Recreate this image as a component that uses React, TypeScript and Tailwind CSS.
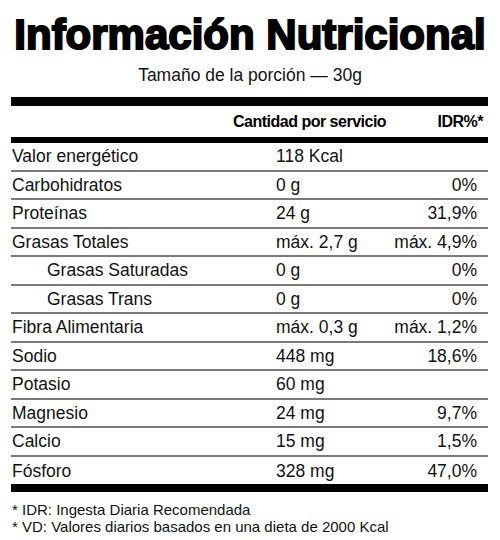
const rows: { label: string; amount: string; idr: string; indent?: boolean }[] = [
  { label: "Valor energético", amount: "118 Kcal", idr: "" },
  { label: "Carbohidratos", amount: "0 g", idr: "0%" },
  { label: "Proteínas", amount: "24 g", idr: "31,9%" },
  { label: "Grasas Totales", amount: "máx. 2,7 g", idr: "máx. 4,9%" },
  { label: "Grasas Saturadas", amount: "0 g", idr: "0%", indent: true },
  { label: "Grasas Trans", amount: "0 g", idr: "0%", indent: true },
  { label: "Fibra Alimentaria", amount: "máx. 0,3 g", idr: "máx. 1,2%" },
  { label: "Sodio", amount: "448 mg", idr: "18,6%" },
  { label: "Potasio", amount: "60 mg", idr: "" },
  { label: "Magnesio", amount: "24 mg", idr: "9,7%" },
  { label: "Calcio", amount: "15 mg", idr: "1,5%" },
  { label: "Fósforo", amount: "328 mg", idr: "47,0%" },
];

export default function App() {
  return (
    <div className="w-[500px] h-[540px] bg-white text-[#111] font-['Liberation_Sans',Arial,sans-serif] overflow-hidden">
      <div className="pt-[15px] text-center">
        <h1 className="text-[42px] leading-[40px] font-bold text-black [-webkit-text-stroke:2px_black]">
          Información Nutricional
        </h1>
        <p className="mt-[10px] text-[17.5px] leading-[20px]">
          Tamaño de la porción — 30g
        </p>
      </div>

      <div className="ml-[11px] w-[477px] mt-[12px]">
        <div className="h-[9px] bg-black" />
        <div className="flex h-[31px] items-center text-[16px] font-bold tracking-[-0.5px] text-black">
          <div className="w-[222px]" />
          <div>Cantidad por servicio</div>
          <div className="flex-1" />
          <div className="pr-[5px]">IDR%*</div>
        </div>
        <div className="h-[6px] bg-black" />

        {rows.map((row, i) => (
          <div
            key={row.label}
            className={`flex h-[28.5px] items-center text-[17.5px] leading-[26px] ${
              i < rows.length - 1 ? "border-b-2 border-[#7a7a7a]" : ""
            }`}
          >
            <div className={row.indent ? "w-[265px] pl-[36px]" : "w-[265px] pl-[1px]"}>
              {row.label}
            </div>
            <div className="flex-1">{row.amount}</div>
            <div className="pr-[11px] text-right">{row.idr}</div>
          </div>
        ))}

        <div className="h-[8px] bg-black mt-[-1px]" />
      </div>

      <div className="ml-[12px] mt-[9px] text-[15px] leading-[17px]">
        <p>* IDR: Ingesta Diaria Recomendada</p>
        <p>* VD: Valores diarios basados en una dieta de 2000 Kcal</p>
      </div>
    </div>
  );
}
